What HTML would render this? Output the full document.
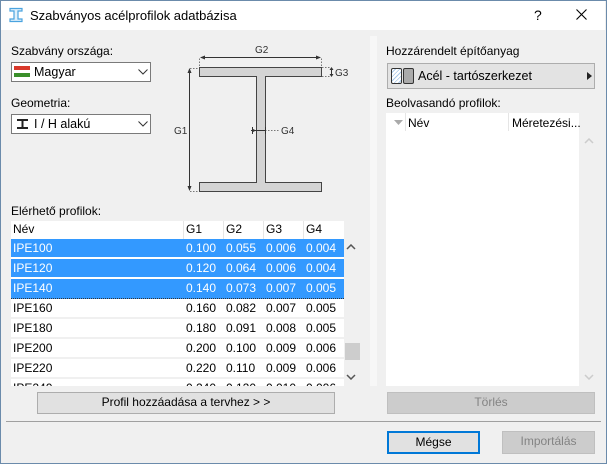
<!DOCTYPE html>
<html><head><meta charset="utf-8"><style>
*{box-sizing:border-box}
body{margin:0;width:607px;height:464px;overflow:hidden;font-family:"Liberation Sans",sans-serif;font-size:12px;color:#000;background:#f0f0f0;position:relative}
.win{position:absolute;left:0;top:0;width:607px;height:464px;border:1px solid #6b8bab;border-top:1px solid #6b8bab}
.a{position:absolute;white-space:nowrap}
.title{position:absolute;left:0;top:0;width:605px;height:30px;background:#fff}
.dd{position:absolute;background:#fff;border:1px solid #7a7a7a;height:20px}
.btn{position:absolute;background:#e1e1e1;border:1px solid #adadad;text-align:center;line-height:19px}
.dis{background:#cccccc;border-color:#bfbfbf;color:#838383}
table{border-collapse:collapse}
.tbl{position:absolute;left:11px;top:221px;width:333px;height:165px;background:#fff;overflow:hidden}
.row{position:absolute;left:0;width:333px;height:20px;line-height:19px;border-bottom:2px solid #f0f0f0}
.row span{position:absolute}
.sel{background:#3399ff;color:#fff;border-bottom:2px solid #fff}
</style></head><body>
<div class="title"></div>
<svg class="a" style="left:9px;top:7px" width="14" height="16" viewBox="0 0 14 16"><path d="M1 1.5H13V4H9V12H13V14.5H1V12H5V4H1Z" fill="#dff0fb" stroke="#4aa3df" stroke-width="1.2"/></svg>
<div class="a" style="left:30px;top:8px;font-size:13px">Szabványos acélprofilok adatbázisa</div>
<div class="a" style="left:534px;top:7px;font-size:14px">?</div>
<svg class="a" style="left:576px;top:9px" width="11" height="11"><path d="M0.5 0.5L10.5 10.5M10.5 0.5L0.5 10.5" stroke="#000" stroke-width="1.1"/></svg>
<div class="win"></div>

<div class="a" style="left:11px;top:44px">Szabvány országa:</div>
<div class="dd" style="left:11px;top:62px;width:140px">
 <div class="a" style="left:2px;top:3px;width:16px;height:4px;background:#d8382a"></div>
 <div class="a" style="left:2px;top:7px;width:16px;height:3px;background:#fff"></div>
 <div class="a" style="left:2px;top:10px;width:16px;height:4px;background:#3a8f2a"></div>
 <div class="a" style="left:22px;top:2px;font-size:12.5px">Magyar</div>
 <svg class="a" style="left:126px;top:6px" width="10" height="6"><path d="M0.5 0.5L5 5L9.5 0.5" stroke="#333" fill="none"/></svg>
</div>
<div class="a" style="left:11px;top:96px">Geometria:</div>
<div class="dd" style="left:11px;top:114px;width:140px">
 <svg class="a" style="left:5px;top:4px" width="11" height="10"><path d="M0 0H11V2H6.5V8H11V10H0V8H4.5V2H0Z" fill="#222"/></svg>
 <div class="a" style="left:22px;top:2px;font-size:12.5px">I / H alakú</div>
 <svg class="a" style="left:126px;top:6px" width="10" height="6"><path d="M0.5 0.5L5 5L9.5 0.5" stroke="#333" fill="none"/></svg>
</div>

<svg class="a" style="left:165px;top:40px" width="190" height="160" viewBox="165 40 190 160" font-family="Liberation Sans" font-size="10" fill="#333">
 <path d="M199.5 67.5H321.5V76.5H265.5V182.5H321.5V191.5H199.5V182.5H256.5V76.5H199.5Z" fill="#d4d4d4" stroke="#444"/>
 <path d="M199.5 66V57M321.5 66V57M322 67.5H331M322 76.5H331M190 68.5H199M190 191.5H199M265 130.5H280" stroke="#777" stroke-dasharray="1.5 1.5"/>
 <path d="M201 57.5H320M189.5 70V189M331.5 69V75M251 130.5H265" stroke="#333"/>
 <path d="M200 57.5L205 55.5V59.5Z M321 57.5L316 55.5V59.5Z M189.5 68L187.5 73H191.5Z M189.5 191L187.5 186H191.5Z M331.5 67L329.5 70H333.5Z M331.5 77L329.5 74H333.5Z M256 130.5L252 128.5V132.5Z" fill="#333"/>
 <path d="M252.5 127V134M265.5 127V134" stroke="#333"/>
 <text x="255" y="53">G2</text><text x="335" y="76">G3</text><text x="174" y="134">G1</text><text x="281" y="134">G4</text>
</svg>

<div class="a" style="left:11px;top:204px">Elérhető profilok:</div>
<div class="tbl">
 <div class="row" style="top:0;height:18px;line-height:17px;border:none">
  <span style="left:2px">Név</span><span style="left:175px">G1</span><span style="left:215px">G2</span><span style="left:255px">G3</span><span style="left:295px">G4</span>
  <span style="left:172px;top:0;width:1px;height:18px;background:#e5e5e5"></span><span style="left:212px;width:1px;height:18px;background:#e5e5e5"></span><span style="left:252px;width:1px;height:18px;background:#e5e5e5"></span><span style="left:292px;width:1px;height:18px;background:#e5e5e5"></span>
 </div>
 <div class="row sel" style="top:18px"><span style="left:2px">IPE100</span><span style="left:175px">0.100</span><span style="left:215px">0.055</span><span style="left:255px">0.006</span><span style="left:295px">0.004</span></div>
 <div class="row sel" style="top:38px"><span style="left:2px">IPE120</span><span style="left:175px">0.120</span><span style="left:215px">0.064</span><span style="left:255px">0.006</span><span style="left:295px">0.004</span></div>
 <div class="row sel" style="top:58px;border-bottom:1px dotted #333;height:20px"><span style="left:2px">IPE140</span><span style="left:175px">0.140</span><span style="left:215px">0.073</span><span style="left:255px">0.007</span><span style="left:295px">0.005</span></div>
 <div class="row" style="top:78px"><span style="left:2px">IPE160</span><span style="left:175px">0.160</span><span style="left:215px">0.082</span><span style="left:255px">0.007</span><span style="left:295px">0.005</span></div>
 <div class="row" style="top:98px"><span style="left:2px">IPE180</span><span style="left:175px">0.180</span><span style="left:215px">0.091</span><span style="left:255px">0.008</span><span style="left:295px">0.005</span></div>
 <div class="row" style="top:118px"><span style="left:2px">IPE200</span><span style="left:175px">0.200</span><span style="left:215px">0.100</span><span style="left:255px">0.009</span><span style="left:295px">0.006</span></div>
 <div class="row" style="top:138px"><span style="left:2px">IPE220</span><span style="left:175px">0.220</span><span style="left:215px">0.110</span><span style="left:255px">0.009</span><span style="left:295px">0.006</span></div>
 <div class="row" style="top:158px"><span style="left:2px">IPE240</span><span style="left:175px">0.240</span><span style="left:215px">0.120</span><span style="left:255px">0.010</span><span style="left:295px">0.006</span></div>
</div>
<svg class="a" style="left:346px;top:244px" width="10" height="6"><path d="M1 5L5 1L9 5" stroke="#555" stroke-width="1.5" fill="none"/></svg>
<div class="a" style="left:345px;top:343px;width:15px;height:17px;background:#cdcdcd"></div>
<svg class="a" style="left:346px;top:374px" width="10" height="6"><path d="M1 1L5 5L9 1" stroke="#555" stroke-width="1.5" fill="none"/></svg>
<div class="btn" style="left:37px;top:392px;width:298px;height:22px">Profil hozzáadása a tervhez &gt; &gt;</div>

<div class="a" style="left:370px;top:36px;width:7px;height:350px;background:#f7f7f7"></div>
<div class="a" style="left:386px;top:44px">Hozzárendelt építőanyag</div>
<div class="btn" style="left:387px;top:63px;width:208px;height:26px;background:#e3e3e3;border-color:#adadad;text-align:left">
 <div class="a" style="left:3px;top:4px;width:11px;height:16px;border:1px solid #333;border-radius:2px;background:repeating-linear-gradient(135deg,#fff 0 2px,#a8c8e8 2px 3px)"></div>
 <div class="a" style="left:15px;top:4px;width:11px;height:16px;border:1px solid #333;border-radius:2px;background:#aaa"></div>
 <div class="a" style="left:30px;top:3px;font-size:12.5px">Acél - tartószerkezet</div>
 <svg class="a" style="left:199px;top:8px" width="5" height="8"><path d="M0 0L5 4L0 8Z" fill="#222"/></svg>
</div>
<div class="a" style="left:386px;top:96px">Beolvasandó profilok:</div>
<div class="a" style="left:386px;top:113px;width:193px;height:273px;background:#fff"></div>
<svg class="a" style="left:394px;top:120px" width="9" height="5"><path d="M0 0H9L4.5 5Z" fill="#aaa"/></svg>
<div class="a" style="left:405px;top:113px;width:1px;height:18px;background:#e5e5e5"></div>
<div class="a" style="left:408px;top:116px">Név</div>
<div class="a" style="left:508px;top:113px;width:1px;height:18px;background:#e5e5e5"></div>
<div class="a" style="left:512px;top:116px">Méretezési...</div>
<svg class="a" style="left:584px;top:138px" width="10" height="6"><path d="M1 5L5 1L9 5" stroke="#ccc" stroke-width="1.5" fill="none"/></svg>
<svg class="a" style="left:584px;top:374px" width="10" height="6"><path d="M1 1L5 5L9 1" stroke="#ccc" stroke-width="1.5" fill="none"/></svg>
<div class="btn dis" style="left:387px;top:392px;width:208px;height:22px">Törlés</div>

<div class="a" style="left:6px;top:421px;width:595px;height:1px;background:#a0a0a0"></div>
<div class="btn" style="left:387px;top:431px;width:93px;height:23px;border:2px solid #0078d7;line-height:19px">Mégse</div>
<div class="btn dis" style="left:502px;top:431px;width:93px;height:23px">Importálás</div>
</body></html>
